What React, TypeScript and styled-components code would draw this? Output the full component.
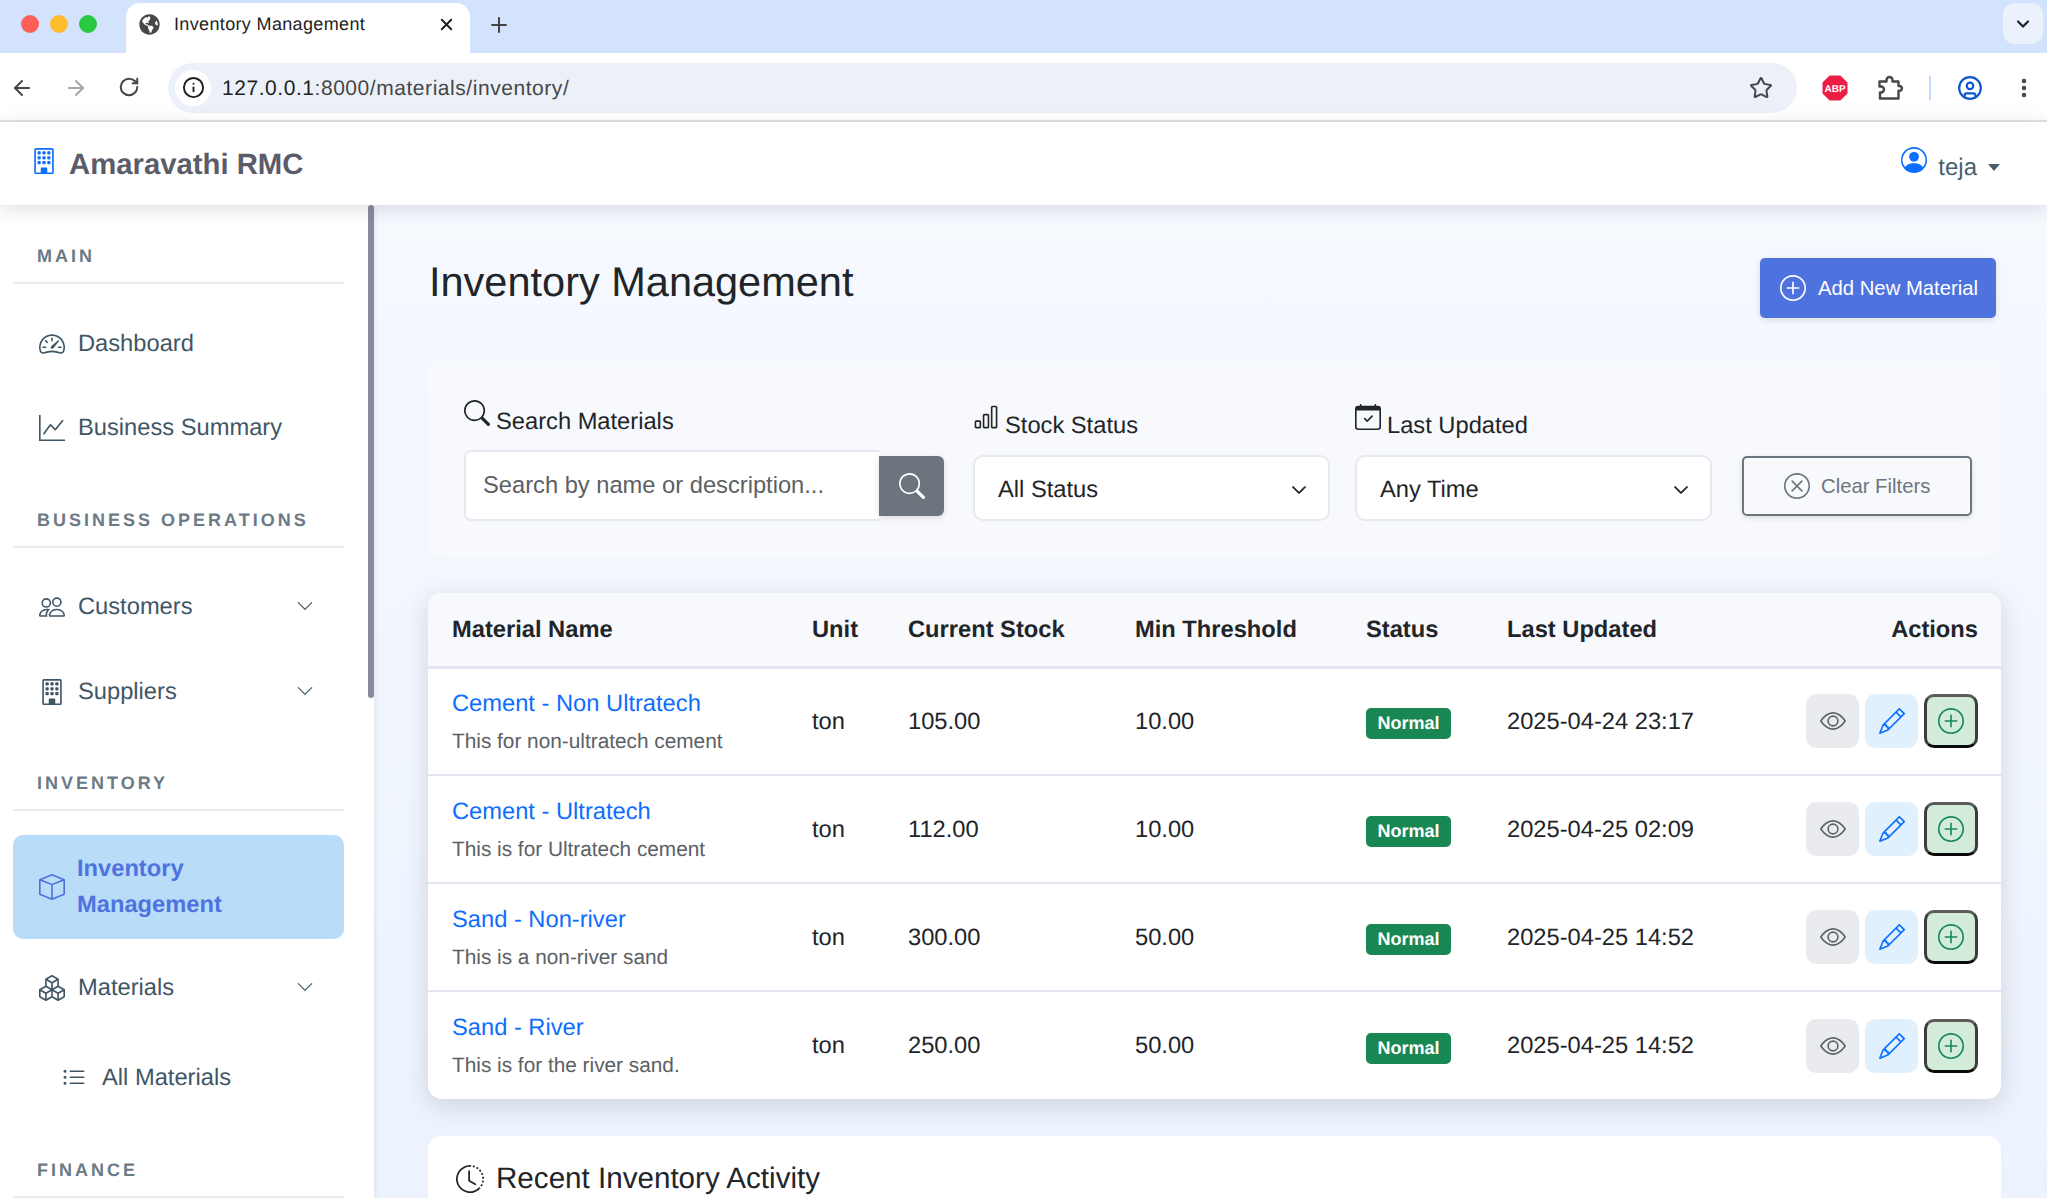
import styled, { createGlobalStyle } from "styled-components";
import { ArrowLeft, ArrowRight, RotateCw, Star, ChevronDown, X, Plus, Info, CircleUser, EllipsisVertical } from "lucide-react";
import { FaGlobeAmericas } from "react-icons/fa";
import {
    BsBarChart, BsBox, BsBoxes, BsBuilding, BsCalendarCheck, BsChevronDown, BsClockHistory, BsEye, BsGraphUp,
    BsListUl, BsPencil, BsPeople, BsPersonCircle, BsPlusCircle, BsSearch, BsSpeedometer2, BsXCircle,
} from "react-icons/bs";

const font = `"Liberation Sans", Arial, sans-serif`;

const GlobalStyle = createGlobalStyle`
    html, body {
        margin: 0;
        height: 100%;
        overflow: hidden;
        font-family: ${font};
        color: #212529;
        text-rendering: geometricPrecision;
    }
    * { box-sizing: border-box; }
`;

const Shell = styled.div`
    height: 100vh;
    display: flex;
    flex-direction: column;
    overflow: hidden;
`;

/* browser chrome */
const TabStrip = styled.div`
    height: 53px;
    flex: none;
    background: #d3e3fd;
    display: flex;
    align-items: flex-start;
    padding: 3px 4px 0 21px;
`;

const Dots = styled.div`
    display: flex;
    gap: 11px;
    margin: 12px 29px 0 0;
`;

const Dot = styled.span<{ $color: string }>`
    width: 18px;
    height: 18px;
    border-radius: 50%;
    background: ${(p) => p.$color};
`;

const Tab = styled.div`
    width: 344px;
    height: 50px;
    background: #fff;
    border-radius: 14px 14px 0 0;
    display: flex;
    align-items: center;
    padding: 0 14px 8px 13px;
    color: #1f1f1f;
    font-size: 18px;
    letter-spacing: 0.35px;
`;

const TabTitle = styled.span`
    margin-left: 14px;
    flex: 1;
`;

const NewTab = styled.div`
    margin: 10px 0 0 17px;
    color: #444;
    display: flex;
`;

const TabListButton = styled.div`
    margin-left: auto;
    width: 40px;
    height: 41px;
    border-radius: 12px;
    background: #ecf2fd;
    display: flex;
    align-items: center;
    justify-content: center;
    color: #1f1f1f;
`;

const Toolbar = styled.div`
    height: 69px;
    flex: none;
    background: #fff;
    border-bottom: 2px solid #e3e3e3;
    display: flex;
    align-items: center;
    padding: 2px 0 0 10px;
`;

const NavButtons = styled.div`
    display: flex;
    gap: 30px;
    width: 158px;
`;

const ChromeIcon = styled.span<{ $color?: string }>`
    display: flex;
    color: ${(p) => p.$color ?? "#474747"};
`;

const AddressBar = styled.div`
    width: 1629px;
    height: 50px;
    border-radius: 25px;
    background: #ecf1f9;
    display: flex;
    align-items: center;
    padding: 0 24px 0 7px;
`;

const InfoPill = styled.span`
    width: 36px;
    height: 36px;
    border-radius: 50%;
    background: #fff;
    display: flex;
    align-items: center;
    justify-content: center;
    color: #1f1f1f;
`;

const Url = styled.span`
    margin: 2px 0 0 11px;
    flex: 1;
    font-size: 21px;
    letter-spacing: 0.55px;
    color: #1f1f1f;
`;

const UrlPath = styled.span`
    color: #474747;
`;

const ToolbarEnd = styled.div`
    display: flex;
    align-items: center;
    margin-left: 25px;
    gap: 29px;
`;

const ToolbarDivider = styled.span`
    width: 2px;
    height: 24px;
    background: #c6dafc;
    margin: 0 -3px;
`;

/* app navbar */
const Navbar = styled.header`
    height: 83px;
    flex: none;
    background: #fff;
    display: flex;
    align-items: center;
    justify-content: space-between;
    padding: 0 47px 0 31px;
    position: relative;
    z-index: 2;
    box-shadow: 0 4px 18px rgba(58, 59, 69, 0.16);
`;

const Brand = styled.div`
    display: flex;
    align-items: center;
    gap: 12px;
    margin-top: 2px;
    font-size: 29.3px;
    font-weight: 700;
    color: #5a5c69;
`;

const BrandIcon = styled.span`
    display: flex;
    color: #0d6efd;
    margin-top: -7px;
`;

const UserMenu = styled.div`
    display: flex;
    align-items: flex-start;
    margin-top: 9px;
    font-size: 24px;
    color: #4a5f6e;
`;

const UserIcon = styled.span`
    display: flex;
    color: #0d6efd;
    margin: -7px 11px 0 0;
`;

const Caret = styled.span`
    width: 0;
    height: 0;
    margin: 10px 0 0 11px;
    border-left: 6px solid transparent;
    border-right: 6px solid transparent;
    border-top: 7px solid #4a5f6e;
`;

const Body = styled.div`
    flex: 1;
    min-height: 0;
    display: flex;
`;

/* sidebar */
const Sidebar = styled.aside`
    width: 374px;
    flex: none;
    background: #fff;
    padding: 40px 30px 0 13px;
    position: relative;
    overflow: hidden;
    box-shadow: 1px 0 6px rgba(58, 59, 69, 0.1);
    z-index: 1;
`;

const Scrollbar = styled.div`
    position: absolute;
    top: 0;
    right: 0;
    width: 6px;
    height: 493px;
    border-radius: 3px;
    background: #878a9c;
`;

const Section = styled.section`
    margin-bottom: 46.5px;
`;

const SectionTitle = styled.h6<{ $tight?: boolean }>`
    margin: 0 0 ${(p) => (p.$tight ? "24px" : "25.5px")};
    padding: 0 24px 15px;
    border-bottom: 2px solid #e9ecef;
    font-size: 18px;
    line-height: 22px;
    font-weight: 700;
    letter-spacing: 3px;
    color: #6c7a86;
`;

const NavList = styled.div`
    display: flex;
    flex-direction: column;
    gap: 16.5px;
`;

const NavItem = styled.a<{ $active?: boolean; $sub?: boolean }>`
    display: flex;
    align-items: center;
    padding: 16px 30px 16px ${(p) => (p.$sub ? "47px" : "24px")};
    margin-bottom: ${(p) => (p.$active ? "-2px" : "0")};
    margin-top: ${(p) => (p.$sub ? "6px" : "0")};
    gap: ${(p) => (p.$sub ? "16px" : p.$active ? "12px" : "13px")};
    font-size: 23.7px;
    line-height: 36px;
    font-weight: ${(p) => (p.$active ? 700 : 400)};
    color: ${(p) => (p.$active ? "#4e73df" : "#3f5666")};
    background: ${(p) => (p.$active ? "#b9dcf9" : "transparent")};
    border-radius: 10px;
`;

const NavIcon = styled.span`
    display: flex;
    flex: none;
    margin-left: 2px;
`;

const NavChevron = styled.span`
    display: flex;
    margin-left: auto;
    margin-top: -2px;
`;

/* main */
const Main = styled.main`
    flex: 1;
    min-width: 0;
    padding: 53px 46px 0 54px;
    background: linear-gradient(180deg, #f6f9fe 0%, #ecf3fe 100%);
`;

const PageHeader = styled.div`
    display: flex;
    justify-content: space-between;
    align-items: flex-start;
    padding: 0 5px 0 1px;
    margin-bottom: 43px;
`;

const PageTitle = styled.h1`
    margin: 0;
    font-size: 41.5px;
    line-height: 48px;
    font-weight: 400;
`;

const AddButton = styled.button`
    height: 60px;
    width: 236px;
    border: 0;
    border-radius: 5px;
    background: #4e73df;
    color: #fff;
    font: 400 20.3px ${font};
    display: flex;
    align-items: center;
    gap: 12px;
    padding: 0 0 0 20px;
    box-shadow: 0 2px 6px rgba(58, 59, 69, 0.15);
`;

const FilterCard = styled.div`
    display: grid;
    grid-template-columns: 509px 382px 387px 230px;
    align-items: end;
    background: #f8f9fc;
    border-radius: 14px;
    padding: 40px 0 36px 36px;
    margin-bottom: 36px;
`;

const FieldLabel = styled.label<{ $tall?: boolean }>`
    display: flex;
    align-items: flex-start;
    gap: 6px;
    font-size: 23.7px;
    line-height: 29px;
    margin-bottom: ${(p) => (p.$tall ? "13px" : "14px")};

    svg {
        margin-top: -1px;
    }
`;

const LabelText = styled.span`
    margin-top: 7px;
`;

const SearchGroup = styled.div`
    display: flex;
    align-items: center;
    width: 479px;
`;

const SearchInput = styled.input`
    width: 415px;
    height: 71px;
    flex: none;
    border: 2px solid #e6e8f2;
    border-right: 0;
    border-radius: 7px 0 0 7px;
    background: #fff;
    padding: 0 17px;
    font: 400 23.7px ${font};
    outline: none;

    &::placeholder {
        color: #5c5f63;
        opacity: 1;
    }
`;

const SearchButton = styled.button`
    width: 65px;
    height: 60px;
    flex: none;
    border: 0;
    border-radius: 0 6px 6px 0;
    background: #6c757d;
    color: #fff;
    display: flex;
    align-items: center;
    justify-content: center;
    box-shadow: 0 2px 6px rgba(58, 59, 69, 0.15);
`;

const SelectBox = styled.div`
    width: 357px;
    height: 66px;
    border: 2px solid #e6e9f2;
    border-radius: 10px;
    background: #fff;
    display: flex;
    align-items: center;
    justify-content: space-between;
    padding: 4px 21px 0 23px;
    font-size: 23.7px;
`;

const ClearButton = styled.button`
    width: 230px;
    height: 60px;
    margin-bottom: 5px;
    border: 2px solid #6c757d;
    border-radius: 5px;
    background: transparent;
    color: #6c757d;
    font: 400 20.3px ${font};
    display: flex;
    align-items: center;
    gap: 11px;
    padding: 0 0 0 40px;
    box-shadow: 0 2px 5px rgba(58, 59, 69, 0.15);
`;

const TableCard = styled.div`
    background: #fff;
    border-radius: 14px;
    overflow: hidden;
    margin-bottom: 37px;
    box-shadow: 0 6px 24px rgba(58, 59, 69, 0.18);
`;

const Table = styled.table`
    width: 100%;
    border-collapse: collapse;
    table-layout: fixed;
`;

const HeadCell = styled.th<{ $width?: number; $right?: boolean }>`
    width: ${(p) => (p.$width ? `${p.$width}px` : "auto")};
    height: 74px;
    padding: 2px ${(p) => (p.$right ? "23px" : "0")} 0 24px;
    background: #f8f9fc;
    border-bottom: 3px solid #e3e6f0;
    text-align: ${(p) => (p.$right ? "right" : "left")};
    font-size: 23.7px;
    font-weight: 700;
`;

const Row = styled.tr`
    border-bottom: 2px solid #e3e6f0;

    &:last-child {
        border-bottom: 0;
    }
`;

const Cell = styled.td<{ $flush?: boolean }>`
    height: 108px;
    padding: ${(p) => (p.$flush ? "0" : "2px")} 0 0 24px;
    font-size: 23.7px;
`;

const MaterialLink = styled.a`
    display: block;
    color: #0d6efd;
    font-size: 23.7px;
    line-height: 29px;
    margin-bottom: 10px;
`;

const MaterialDesc = styled.small`
    display: block;
    color: #5c6166;
    font-size: 20.8px;
    line-height: 26px;
`;

const Badge = styled.span`
    display: inline-block;
    width: 85px;
    height: 31px;
    margin-top: 5px;
    border-radius: 5px;
    background: #198754;
    color: #fff;
    font-size: 18px;
    font-weight: 700;
    line-height: 31px;
    text-align: center;
`;

const Actions = styled.div`
    display: flex;
    justify-content: flex-end;
    gap: 6px;
    padding-right: 23px;
`;

const ActionButton = styled.button<{ $kind: "view" | "edit" | "add" }>`
    width: ${(p) => (p.$kind === "add" ? "54px" : "53px")};
    height: 54px;
    border-radius: 10px;
    display: flex;
    align-items: center;
    justify-content: center;
    padding: 0;
    border: ${(p) => (p.$kind === "add" ? "3px solid" : "0")};
    border-color: #5c5c5c #3c3c3c #0a0a0a #3c3c3c;
    background: ${(p) => ({ view: "#e9ebef", edit: "#e0f1fd", add: "#d3ecd9" })[p.$kind]};
    color: ${(p) => ({ view: "#5c636a", edit: "#0d6efd", add: "#198754" })[p.$kind]};
`;

const ActivityCard = styled.div`
    background: #fff;
    border-radius: 14px 14px 0 0;
    height: 200px;
    padding: 23px 28px;
    display: flex;
    align-items: flex-start;
    gap: 12px;
`;

const ActivityTitle = styled.h2`
    margin: 0;
    font-size: 29.6px;
    line-height: 40px;
    font-weight: 400;
`;

const ActivityIcon = styled.span`
    display: flex;
    margin-top: 6px;
`;

const materials = [
    { name: "Cement - Non Ultratech", desc: "This for non-ultratech cement", stock: "105.00", min: "10.00", updated: "2025-04-24 23:17" },
    { name: "Cement - Ultratech", desc: "This is for Ultratech cement", stock: "112.00", min: "10.00", updated: "2025-04-25 02:09" },
    { name: "Sand - Non-river", desc: "This is a non-river sand", stock: "300.00", min: "50.00", updated: "2025-04-25 14:52" },
    { name: "Sand - River", desc: "This is for the river sand.", stock: "250.00", min: "50.00", updated: "2025-04-25 14:52" },
];

function AdblockIcon() {
    return (
        <svg width="26" height="26" viewBox="0 0 26 26">
            <polygon points="7.6,0.5 18.4,0.5 25.5,7.6 25.5,18.4 18.4,25.5 7.6,25.5 0.5,18.4 0.5,7.6" fill="#ee1d46" />
            <text x="13" y="17" textAnchor="middle" fontFamily={font} fontWeight="700" fontSize="10" fill="#fff">ABP</text>
        </svg>
    );
}

// chrome's extension piece: squared body, tab on top and right, notch on the left
function ExtensionIcon() {
    return (
        <svg width="26" height="26" viewBox="0 0 26 26" fill="none" stroke="#474747" strokeWidth="2.4" strokeLinejoin="round">
            <path d="M2.5 6.5H9.5V5a3 3 0 0 1 6 0v1.5H21.5V11H22.5a2.4 2.4 0 0 1 0 4.8H21.5V23.5H3V17.5H4a3 3 0 0 0 0-6H2.5Z" />
        </svg>
    );
}

function BrowserChrome() {
    return (
        <>
            <TabStrip>
                <Dots>
                    <Dot $color="#ff5f57" />
                    <Dot $color="#febc2e" />
                    <Dot $color="#28c840" />
                </Dots>
                <Tab>
                    <ChromeIcon><FaGlobeAmericas size={21} /></ChromeIcon>
                    <TabTitle>Inventory Management</TabTitle>
                    <ChromeIcon $color="#1f1f1f"><X size={19} strokeWidth={2.4} /></ChromeIcon>
                </Tab>
                <NewTab><Plus size={24} strokeWidth={2} /></NewTab>
                <TabListButton><ChevronDown size={20} strokeWidth={2.6} /></TabListButton>
            </TabStrip>
            <Toolbar>
                <NavButtons>
                    <ChromeIcon><ArrowLeft size={24} strokeWidth={2} /></ChromeIcon>
                    <ChromeIcon $color="#a6a6a6"><ArrowRight size={24} strokeWidth={2} /></ChromeIcon>
                    <ChromeIcon><RotateCw size={22} strokeWidth={2.2} /></ChromeIcon>
                </NavButtons>
                <AddressBar>
                    <InfoPill><Info size={23} strokeWidth={2} /></InfoPill>
                    <Url>127.0.0.1<UrlPath>:8000/materials/inventory/</UrlPath></Url>
                    <ChromeIcon><Star size={24} strokeWidth={2} /></ChromeIcon>
                </AddressBar>
                <ToolbarEnd>
                    <AdblockIcon />
                    <ExtensionIcon />
                    <ToolbarDivider />
                    <ChromeIcon $color="#0b57d0"><CircleUser size={26} strokeWidth={2} /></ChromeIcon>
                    <ChromeIcon><EllipsisVertical size={24} strokeWidth={2.6} /></ChromeIcon>
                </ToolbarEnd>
            </Toolbar>
        </>
    );
}

function SideNav() {
    return (
        <Sidebar>
            <Scrollbar />
            <Section>
                <SectionTitle>MAIN</SectionTitle>
                <NavList>
                    <NavItem><NavIcon><BsSpeedometer2 size={26} /></NavIcon>Dashboard</NavItem>
                    <NavItem><NavIcon><BsGraphUp size={26} /></NavIcon>Business Summary</NavItem>
                </NavList>
            </Section>
            <Section>
                <SectionTitle>BUSINESS OPERATIONS</SectionTitle>
                <NavList>
                    <NavItem><NavIcon><BsPeople size={26} /></NavIcon>Customers<NavChevron><BsChevronDown size={18} /></NavChevron></NavItem>
                    <NavItem><NavIcon><BsBuilding size={26} /></NavIcon>Suppliers<NavChevron><BsChevronDown size={18} /></NavChevron></NavItem>
                </NavList>
            </Section>
            <Section>
                <SectionTitle $tight>INVENTORY</SectionTitle>
                <NavList>
                    <NavItem $active><NavIcon><BsBox size={26} /></NavIcon>Inventory<br />Management</NavItem>
                    <NavItem><NavIcon><BsBoxes size={26} /></NavIcon>Materials<NavChevron><BsChevronDown size={18} /></NavChevron></NavItem>
                    <NavItem $sub><NavIcon><BsListUl size={24} /></NavIcon>All Materials</NavItem>
                </NavList>
            </Section>
            <Section>
                <SectionTitle>FINANCE</SectionTitle>
            </Section>
        </Sidebar>
    );
}

function Filters() {
    return (
        <FilterCard>
            <div>
                <FieldLabel $tall><BsSearch size={26} /><LabelText>Search Materials</LabelText></FieldLabel>
                <SearchGroup>
                    <SearchInput placeholder="Search by name or description..." />
                    <SearchButton><BsSearch size={26} /></SearchButton>
                </SearchGroup>
            </div>
            <div>
                <FieldLabel><BsBarChart size={26} /><LabelText>Stock Status</LabelText></FieldLabel>
                <SelectBox>All Status<BsChevronDown size={16} strokeWidth={1} /></SelectBox>
            </div>
            <div>
                <FieldLabel><BsCalendarCheck size={26} /><LabelText>Last Updated</LabelText></FieldLabel>
                <SelectBox>Any Time<BsChevronDown size={16} strokeWidth={1} /></SelectBox>
            </div>
            <ClearButton><BsXCircle size={26} />Clear Filters</ClearButton>
        </FilterCard>
    );
}

function InventoryTable() {
    return (
        <TableCard>
            <Table>
                <thead>
                    <tr>
                        <HeadCell $width={360}>Material Name</HeadCell>
                        <HeadCell $width={96}>Unit</HeadCell>
                        <HeadCell $width={227}>Current Stock</HeadCell>
                        <HeadCell $width={231}>Min Threshold</HeadCell>
                        <HeadCell $width={141}>Status</HeadCell>
                        <HeadCell>Last Updated</HeadCell>
                        <HeadCell $width={221} $right>Actions</HeadCell>
                    </tr>
                </thead>
                <tbody>
                    {materials.map((m) => (
                        <Row key={m.name}>
                            <Cell>
                                <MaterialLink>{m.name}</MaterialLink>
                                <MaterialDesc>{m.desc}</MaterialDesc>
                            </Cell>
                            <Cell>ton</Cell>
                            <Cell>{m.stock}</Cell>
                            <Cell>{m.min}</Cell>
                            <Cell $flush><Badge>Normal</Badge></Cell>
                            <Cell>{m.updated}</Cell>
                            <Cell $flush>
                                <Actions>
                                    <ActionButton $kind="view"><BsEye size={26} /></ActionButton>
                                    <ActionButton $kind="edit"><BsPencil size={26} /></ActionButton>
                                    <ActionButton $kind="add"><BsPlusCircle size={26} /></ActionButton>
                                </Actions>
                            </Cell>
                        </Row>
                    ))}
                </tbody>
            </Table>
        </TableCard>
    );
}

function App() {
    return (
        <Shell>
            <GlobalStyle />
            <BrowserChrome />
            <Navbar>
                <Brand>
                    <BrandIcon><BsBuilding size={26} /></BrandIcon>
                    Amaravathi RMC
                </Brand>
                <UserMenu>
                    <UserIcon><BsPersonCircle size={26} /></UserIcon>
                    teja
                    <Caret />
                </UserMenu>
            </Navbar>
            <Body>
                <SideNav />
                <Main>
                    <PageHeader>
                        <PageTitle>Inventory Management</PageTitle>
                        <AddButton><BsPlusCircle size={26} />Add New Material</AddButton>
                    </PageHeader>
                    <Filters />
                    <InventoryTable />
                    <ActivityCard>
                        <ActivityIcon><BsClockHistory size={28} /></ActivityIcon>
                        <ActivityTitle>Recent Inventory Activity</ActivityTitle>
                    </ActivityCard>
                </Main>
            </Body>
        </Shell>
    );
}

export default App;
